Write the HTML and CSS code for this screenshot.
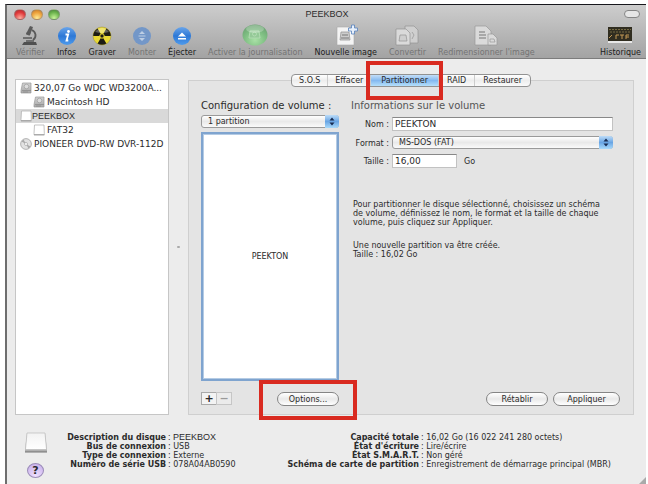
FILE: index.html
```html
<!DOCTYPE html>
<html lang="fr">
<head>
<meta charset="utf-8">
<title>PEEKBOX</title>
<link rel="stylesheet" href="styles.css">
</head>
<body>
<svg class="defs" width="0" height="0" aria-hidden="true">
  <defs>
    <linearGradient id="blue" x1="0" y1="0" x2="0" y2="1"><stop offset="0" stop-color="#6aa5ea"/><stop offset=".5" stop-color="#2d78d6"/><stop offset="1" stop-color="#4f9bec"/></linearGradient>
    <radialGradient id="green" cx=".5" cy=".75" r=".7"><stop offset="0" stop-color="#a9e0a6"/><stop offset=".6" stop-color="#7fbf83"/><stop offset="1" stop-color="#6ea574"/></radialGradient>
    <linearGradient id="metal" x1="0" y1="0" x2="0" y2="1"><stop offset="0" stop-color="#d2d2d2"/><stop offset="1" stop-color="#a8a8a8"/></linearGradient>
    <linearGradient id="plastic" x1="0" y1="0" x2="0" y2="1"><stop offset="0" stop-color="#f2f2f2"/><stop offset="1" stop-color="#ffffff"/></linearGradient>
    <symbol id="disk" viewBox="0 0 12 12"><path d="M2.500 1h8.500v10H1V8.500z" fill="url(#metal)" stroke="#999" stroke-width=".7"/><circle cx="6.500" cy="4.500" r="2.300" fill="#dcdcdc" stroke="#8b8b8b" stroke-width=".5"/><path d="M2 8.500h9M3 10h5" stroke="#888" stroke-width=".7"/></symbol>
    <symbol id="drive" viewBox="0 0 12 12"><path d="M1.500 1h9.500l.3 8.500v1.300H1V9.500z" fill="#fff" stroke="#b4b4b4" stroke-width=".8"/><path d="M1 10.800h10.300" stroke="#999"/></symbol>
  </defs>
</svg>
<div class="window">
  <header class="chrome">
    <div class="titlebar">
      <div class="lights">
        <button class="light red" aria-label="Fermer"></button>
        <button class="light amber" aria-label="Réduire"></button>
        <button class="light lime" aria-label="Agrandir"></button>
      </div>
      <h1 class="title">PEEKBOX</h1>
      <button class="pill" aria-label="Barre d’outils"></button>
    </div>
    <nav class="toolbar">
      <button class="tool off">
        <svg width="22" height="21" viewBox="0 0 22 21"><path d="M11 1l3 1-3 8-4-1z" fill="#5a5a5a"/><path d="M7.500 8l3.500 1.500" stroke="#5a5a5a" stroke-width="2.500"/><path d="M13 5c4 2 5 7 1 10" stroke="#5a5a5a" stroke-width="1.800" fill="none"/><path d="M4 13h9M7 16h8" stroke="#5a5a5a" stroke-width="1.500"/><path d="M3 20l2-3h12l1 3z" fill="#505050"/></svg>
        <span>Vérifier</span></button>
      <button class="tool">
        <svg width="20" height="21" viewBox="0 0 20 21"><circle cx="10" cy="11" r="9" fill="url(#blue)"/><circle cx="11.500" cy="6.500" r="1.400" fill="#fff"/><path d="M8.500 9.500h2.700L9.500 15.500h1.800" stroke="#fff" stroke-width="1.800" fill="none"/></svg>
        <span>Infos</span></button>
      <button class="tool">
        <svg width="20" height="21" viewBox="0 0 20 21"><circle cx="10" cy="11" r="9" fill="#e9d935" stroke="#a79a37" stroke-width=".6"/><path d="M10 11L1.200 11A8.800 8.800 0 0 1 5.600 3.400zM10 11l8.800 0A8.800 8.800 0 0 0 14.400 3.400zM10 11L5.600 18.600a8.800 8.800 0 0 0 8.800 0z" fill="#1d1c14"/><circle cx="10" cy="11" r="2.200" fill="#1d1c14" stroke="#e9d935"/><path d="M3 7Q10-1 17 7Q10 9 3 7z" fill="#fff" opacity=".3"/></svg>
        <span>Graver</span></button>
      <button class="tool off">
        <svg width="20" height="21" viewBox="0 0 20 21"><circle cx="10" cy="11" r="9" fill="#7397c8"/><path d="M7 9l3-3 3 3zM7 13l3 3 3-3z" fill="#bdcee4"/><path d="M6.500 11h7" stroke="#bdcee4"/></svg>
        <span>Monter</span></button>
      <button class="tool">
        <svg width="20" height="21" viewBox="0 0 20 21"><circle cx="10" cy="11" r="9" fill="url(#blue)"/><path d="M6 11.500l4-4 4 4zM6 13h8v1.500H6z" fill="#fff"/></svg>
        <span>Éjecter</span></button>
      <button class="tool off">
        <svg width="28" height="23" viewBox="0 0 28 23"><ellipse cx="14" cy="12" rx="12.500" ry="10.500" fill="url(#green)"/><path d="M9 8h9l1 7H8z" fill="#94c997" stroke="#b8deb8" stroke-width=".8"/><circle cx="13.500" cy="11" r="2" fill="none" stroke="#b8deb8" stroke-width=".8"/><ellipse cx="14" cy="6" rx="9" ry="4" fill="#fff" opacity=".25"/></svg>
        <span>Activer la journalisation</span></button>
      <button class="tool">
        <svg width="24" height="22" viewBox="0 0 24 22"><path d="M3 3h12l5 5v13H3z" fill="#f4f4f4" stroke="#aaa" stroke-width=".6"/><path d="M7 8h8l1 8H6z" fill="#ccc" stroke="#8e8e8e" stroke-width=".7"/><path d="M8 11h6M7 14h8" stroke="#777"/><path d="M17.500 1h3v3h3v3h-3v3h-3V7h-3V4h3z" fill="#e8f0fb" stroke="#5681bd" stroke-width=".8"/></svg>
        <span>Nouvelle image</span></button>
      <button class="tool off">
        <svg width="24" height="22" viewBox="0 0 24 22"><g fill="#cfcfcf" stroke="#949494" stroke-width=".7"><path d="M10 2h9l4 4v13H10z"/><path d="M1 5h10l4 4v12H1z" fill="#dadada"/><path d="M5 11h6l1 6H4z"/><path d="M17 8l2 3-2 4" fill="none"/></g></svg>
        <span>Convertir</span></button>
      <button class="tool off">
        <svg width="26" height="22" viewBox="0 0 26 22"><g fill="#dadada" stroke="#989898" stroke-width=".7"><path d="M2 2h11l5 5v14H2z"/><path d="M6 8h6M6 11h7M6 14h7" stroke-width="1.400"/><path d="M15 10h5l4 4v7h-9z"/><path d="M17 15h4l1 3h-5z"/></g></svg>
        <span>Redimensionner l'image</span></button>
      <button class="tool last">
        <svg width="24" height="21" viewBox="0 0 24 21"><path d="M0 2h24v14H0z" fill="#302d20"/><path d="M0 16h24v2H0z" fill="#e8e8e8"/><path d="M1 4.500h22M2 7h20" stroke="#756a42" stroke-dasharray="2 1"/><path d="M1 13l3-3M8 14v-4h3M14 14v-4M12 10h4M18 14v-4h3M18 12h3" stroke="#c39a55" fill="none"/></svg>
        <span>Historique</span></button>
    </nav>
  </header>

  <main class="body">
    <ul class="disks">
      <li><svg width="12" height="12"><use href="#disk"/></svg><span>320,07 Go WDC WD3200A...</span></li>
      <li class="child"><svg width="12" height="12"><use href="#disk"/></svg><span>Macintosh HD</span></li>
      <li class="selected"><svg width="12" height="12"><use href="#drive"/></svg><span>PEEKBOX</span></li>
      <li class="child"><svg width="12" height="12"><use href="#drive"/></svg><span>FAT32</span></li>
      <li><svg width="12" height="12" viewBox="0 0 12 12"><circle cx="6" cy="6" r="5.400" fill="#e2e2e2" stroke="#999" stroke-width=".7"/><path d="M6 6L1.500 3.500 3.500 1.500zM6 6l4.500 2.500-2 2z" fill="#aaa"/><circle cx="6" cy="6" r="1.500" fill="#fff" stroke="#999" stroke-width=".6"/></svg><span>PIONEER DVD-RW DVR-112D</span></li>
    </ul>
    <div class="splitter"><i></i></div>
    <section class="panel">
      <div class="tabs">
        <button class="narrow">S.O.S</button><button class="narrow">Effacer</button><button class="current">Partitionner</button><button>RAID</button><button>Restaurer</button>
      </div>
      <div class="columns">
        <div class="scheme">
          <label class="heading" for="scheme">Configuration de volume :</label>
          <div class="popup">
            <select id="scheme"><option>1 partition</option></select>
            <svg width="14" height="12" viewBox="0 0 14 12"><path d="M7 2L9.500 5h-5zM7 10L4.500 7h5z" fill="#182c52"/></svg>
          </div>
          <div class="map">PEEKTON</div>
          <div class="actions">
            <div class="pair"><button aria-label="Ajouter">+</button><button disabled aria-label="Supprimer">−</button></div>
            <div class="marked"><button class="push">Options...</button></div>
          </div>
        </div>
        <div class="info">
          <h2 class="heading soft">Informations sur le volume</h2>
          <div class="form">
            <label for="nom">Nom :</label><input id="nom" value="PEEKTON">
            <label for="format">Format :</label>
            <div class="popup">
              <select id="format"><option>MS-DOS (FAT)</option></select>
              <svg width="14" height="12" viewBox="0 0 14 12"><path d="M7 2L9.500 5h-5zM7 10L4.500 7h5z" fill="#182c52"/></svg>
            </div>
            <label for="taille">Taille :</label><div class="size"><input id="taille" value="16,00"><span>Go</span></div>
          </div>
          <div class="help">
            <p>Pour partitionner le disque sélectionné, choisissez un schéma<br>de volume, définissez le nom, le format et la taille de chaque<br>volume, puis cliquez sur Appliquer.</p>
            <p>Une nouvelle partition va être créée.<br>Taille : 16,02 Go</p>
          </div>
          <div class="buttons"><button class="push">Rétablir</button><button class="push wide">Appliquer</button></div>
        </div>
      </div>
    </section>
  </main>

  <footer class="details">
    <div class="side">
      <svg width="24" height="24" viewBox="0 0 24 24"><path d="M3 2h18l2 17v3H1v-3z" fill="#b0b0b0"/><path d="M3 2h18l1.500 16.500h-21z" fill="url(#plastic)" stroke="#bbb" stroke-width=".7"/><path d="M1 20.500h22" stroke="#8f8f8f"/></svg>
      <button class="ask" aria-label="Aide">?</button>
    </div>
    <dl class="left">
      <dt>Description du disque</dt><dd class="plain">PEEKBOX</dd>
      <dt>Bus de connexion</dt><dd>USB</dd>
      <dt>Type de connexion</dt><dd>Externe</dd>
      <dt>Numéro de série USB</dt><dd>078A04AB0590</dd>
    </dl>
    <dl class="right">
      <dt>Capacité totale</dt><dd>16,02 Go (16 022 241 280 octets)</dd>
      <dt>État d'écriture</dt><dd>Lire/écrire</dd>
      <dt>État S.M.A.R.T.</dt><dd>Non géré</dd>
      <dt>Schéma de carte de partition</dt><dd>Enregistrement de démarrage principal (MBR)</dd>
    </dl>
    <svg class="grip" width="7" height="7" viewBox="0 0 7 7"><path d="M7 0v7H0z" fill="#aaa"/></svg>
  </footer>
</div>
</body>
</html>
```
FILE: styles.css
```css
* { box-sizing: border-box; }
body {
  margin: 0;
  padding: 4px 2px 0 5px;
  background: #fff;
  color: #2b2b2b;
  font: 8px/9px "DejaVu Sans", "Noto Sans", sans-serif;
}
h1, h2, p, ul, dl, dd { margin: 0; padding: 0; font: inherit; }
button, input, select { margin: 0; padding: 0; border: 0; font: inherit; color: inherit; background: none; }
svg { display: block; flex: none; }
.defs { position: absolute; }

.window {
  display: flex;
  flex-direction: column;
  min-height: calc(100vh - 4px);
  border-top: 1px solid #17171c;
  border-left: 2px solid #6e6e6e;
  background: #ececec;
}
.chrome { background: linear-gradient(#cdcdcd, #a3a3a3); border-bottom: 1px solid #7c7c7c; }
.titlebar { display: grid; grid-template-columns: 1fr auto 1fr; align-items: center; height: 18px; padding: 0 6px 0 7px; }
.lights { display: flex; gap: 5px; }
.light { width: 12px; height: 11px; border: 1px solid #8888; border-radius: 50%; }
.red { background: radial-gradient(circle at 50% 90%, #ffb0a0, #e0393b 60%, #a82a2c); }
.amber { background: radial-gradient(circle at 50% 90%, #ffeb95, #eca03b 60%, #b8752e); }
.lime { background: radial-gradient(circle at 50% 90%, #c9f59a, #6cb34d 60%, #447f36); }
.title { font: 9px/12px "Liberation Sans", sans-serif; }
.pill { justify-self: end; width: 16px; height: 8px; border: 1px solid #858585; border-radius: 4px; background: #e6e6e6; }
.toolbar { display: flex; align-items: flex-end; gap: 12px; height: 35px; padding: 0 5px 0 9px; }
.tool { display: flex; flex-direction: column; align-items: center; gap: 2px; line-height: 10px; white-space: nowrap; color: #1c1c1c; }
.off { color: #747474; }
.last { margin-left: auto; }

.body { display: flex; padding: 20px 12px 0 8px; }
.disks {
  flex: none;
  width: 154px;
  padding-top: 1px;
  border: 1px solid #c6c6c6;
  background: #fff;
  list-style: none;
  font-size: 9px;
}
.disks li { display: flex; align-items: center; gap: 2px; height: 14px; padding-left: 4px; white-space: nowrap; }
.disks .child { padding-left: 17px; }
.disks .selected { gap: 0; background: #d9d9d9; font-family: "Liberation Sans", sans-serif; }
.splitter { display: flex; align-items: center; justify-content: center; width: 19px; flex: none; }
.splitter i { width: 3px; height: 2px; border-radius: 1px; background: #aaa; }

.panel { flex: 1; min-width: 0; margin-top: 1px; border: 1px solid #cfcfcf; background: #e4e4e4; }
.tabs {
  display: flex;
  width: max-content;
  height: 13px;
  margin: -7px auto 0;
  border: 1px solid #929292;
  border-radius: 4px;
  background: linear-gradient(#fff, #ededed 50%, #fafafa);
}
.tabs button { padding: 0 8px; border-right: 1px solid #ccc; }
.tabs .narrow { padding: 0 7px; }
.tabs button:last-child { border-right: 0; }
.tabs .current { position: relative; padding: 0 10px; background: linear-gradient(#c4def8, #84b9f0 50%, #b5e0fb); }
.tabs .current::after { content: ""; position: absolute; inset: -14px -5px; border: 4px solid #d92a20; }
.columns { display: flex; gap: 12px; padding: 13px 13px 8px 12px; }
.scheme { flex: none; width: 138px; }
.heading { display: block; height: 15px; font-size: 10px; line-height: 12px; white-space: nowrap; }
.soft { color: #555; }
.popup { position: relative; }
.popup select {
  display: block;
  width: 100%;
  height: 13px;
  padding: 0 6px;
  appearance: none;
  border: 1px solid #9a9a9a;
  border-radius: 3px;
  background: linear-gradient(#fff, #e9e9e9 50%, #fafafa);
}
.popup svg { position: absolute; top: 0; right: 0; height: 13px; border-radius: 0 3px 3px 0; background: linear-gradient(#bddcf8, #69a5e4 50%, #a9dafb); pointer-events: none; }
.map {
  display: flex;
  align-items: center;
  justify-content: center;
  height: 249px;
  margin-top: 4px;
  border: 2px solid #7fa4cf;
  outline: 1px solid #b4cbe4;
  outline-offset: -3px;
  background: #fff;
}
.actions { display: flex; justify-content: space-between; margin-top: 11px; }
.pair { display: flex; }
.pair button { width: 16px; height: 13px; margin-right: -1px; border: 1px solid #aaa; background: #f3f3f3; font-size: 11px; font-weight: bold; line-height: 10px; }
.pair button:disabled { color: #999; border-color: #c6c6c6; background: #ebebeb; }
.push { width: 62px; height: 14px; border: 1px solid #858585; border-radius: 7px; background: linear-gradient(#fff, #e9e9e9 50%, #fff); }
.wide { width: 67px; }
.marked { position: relative; }
.marked::after { content: ""; position: absolute; inset: -12px -18px -14px -18px; border: 4px solid #d92a20; }

.info { flex: 1; min-width: 0; display: flex; flex-direction: column; }
.form { display: grid; grid-template-columns: 38px 1fr; column-gap: 3px; row-gap: 5px; align-items: center; margin: 2px 7px 0 0; }
.form label { justify-self: end; padding-top: 1px; white-space: nowrap; }
.form input { width: 100%; height: 14px; padding: 0 2px; border: 1px solid #c2c2c2; border-top-color: #888; background: #fff; font-size: 9px; }
.size { display: flex; align-items: center; gap: 7px; }
.form .size input { width: 65px; }
.help { display: grid; gap: 14px; margin: 32px 0 0 2px; white-space: nowrap; }
.buttons { display: flex; justify-content: flex-end; gap: 5px; margin-top: auto; }

.details { position: relative; flex: 1; display: flex; padding-top: 16px; white-space: nowrap; }
.side { width: 57px; flex: none; display: flex; flex-direction: column; align-items: center; gap: 8px; }
.ask { width: 17px; height: 15px; border: 1px solid #9b8cb8; border-radius: 50%; background: radial-gradient(circle at 50% 90%, #efe0ff, #c4abe8); font-size: 11px; font-weight: bold; line-height: 13px; }
dl { display: grid; column-gap: 2px; align-content: start; padding-top: 2px; }
.left { grid-template-columns: 102px 1fr; width: 188px; }
.right { grid-template-columns: 167px 1fr; }
dt { justify-self: end; font-weight: bold; }
dd::before { content: ": "; }
.plain { font: 9px/9px "Liberation Sans", sans-serif; }
.grip { position: absolute; right: 0; bottom: 0; }
```
